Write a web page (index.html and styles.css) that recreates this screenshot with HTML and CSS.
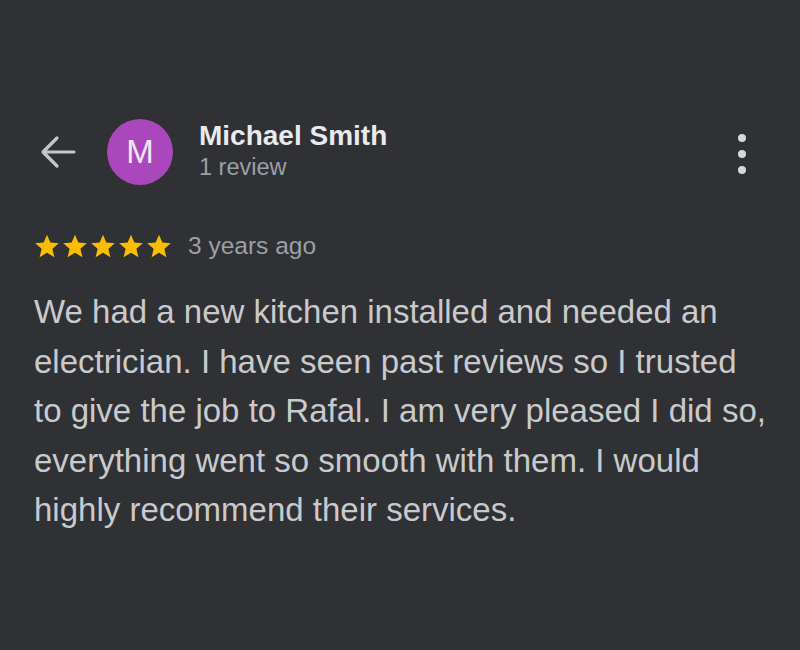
FILE: index.html
```html
<!DOCTYPE html>
<html>
<head>
<meta charset="utf-8">
<link rel="stylesheet" href="styles.css">
</head>
<body>
<div class="page">
  <header class="head">
    <svg class="back" width="36" height="34" viewBox="0 0 36 34"><path d="M34 17H4M17 3L3 17l14 14" fill="none" stroke="#c4c6c9" stroke-width="3.2" stroke-linecap="round" stroke-linejoin="round"/></svg>
    <div class="avatar">M</div>
    <div class="who">
      <div class="name">Michael Smith</div>
      <div class="count">1 review</div>
    </div>
    <div class="more"><span></span><span></span><span></span></div>
  </header>
  <div class="meta">
    <div class="stars">
      <svg viewBox="0 0 24 24"><path d="M12 1.5l3.1 7.2 7.8.7-5.9 5.2 1.8 7.7L12 18.2l-6.8 4.1 1.8-7.7-5.9-5.2 7.8-.7z"/></svg>
      <svg viewBox="0 0 24 24"><path d="M12 1.5l3.1 7.2 7.8.7-5.9 5.2 1.8 7.7L12 18.2l-6.8 4.1 1.8-7.7-5.9-5.2 7.8-.7z"/></svg>
      <svg viewBox="0 0 24 24"><path d="M12 1.5l3.1 7.2 7.8.7-5.9 5.2 1.8 7.7L12 18.2l-6.8 4.1 1.8-7.7-5.9-5.2 7.8-.7z"/></svg>
      <svg viewBox="0 0 24 24"><path d="M12 1.5l3.1 7.2 7.8.7-5.9 5.2 1.8 7.7L12 18.2l-6.8 4.1 1.8-7.7-5.9-5.2 7.8-.7z"/></svg>
      <svg viewBox="0 0 24 24"><path d="M12 1.5l3.1 7.2 7.8.7-5.9 5.2 1.8 7.7L12 18.2l-6.8 4.1 1.8-7.7-5.9-5.2 7.8-.7z"/></svg>
    </div>
    <span class="when">3 years ago</span>
  </div>
  <p class="text">We had a new kitchen installed and needed an<br>electrician. I have seen past reviews so I trusted<br>to give the job to Rafal. I am very pleased I did so,<br>everything went so smooth with them. I would<br>highly recommend their services.</p>
</div>
</body>
</html>
```
FILE: styles.css
```css
html, body {
  margin: 0;
  padding: 0;
  background: #303134;
}
body {
  width: 800px;
  height: 650px;
  overflow: hidden;
  font-family: "Liberation Sans", Arial, sans-serif;
}
.page {
  padding: 118px 0 0 34px;
}
.head {
  display: flex;
  align-items: center;
  height: 67px;
}
.back {
  margin-left: 6px;
  flex: none;
}
.avatar {
  flex: none;
  width: 66px;
  height: 66px;
  border-radius: 50%;
  background: #ab47bc;
  color: #f3e8f6;
  font-size: 33px;
  display: flex;
  align-items: center;
  justify-content: center;
  margin-left: 31px;
}
.who {
  margin-left: 26px;
  flex: 1;
}
.name {
  color: #e8eaed;
  font-size: 28px;
  font-weight: bold;
  line-height: 30px;
}
.count {
  color: #9aa0a6;
  font-size: 23.5px;
  line-height: 30px;
  margin-top: 1px;
}
.more {
  display: flex;
  flex-direction: column;
  gap: 8px;
  margin-right: 54px;
  margin-top: 4px;
}
.more span {
  width: 8px;
  height: 8px;
  border-radius: 50%;
  background: #d5d6d8;
}
.meta {
  display: flex;
  align-items: center;
  margin-top: 46px;
  height: 30px;
}
.stars {
  display: flex;
  gap: 2px;
}
.stars svg {
  width: 26px;
  height: 26px;
  fill: #fbbc04;
}
.when {
  color: #9aa0a6;
  font-size: 24.5px;
  margin-left: 16px;
}
.text {
  margin: 26px 0 0 0;
  color: #c9cacd;
  font-size: 33px;
  line-height: 49.5px;
  white-space: nowrap;
}
```
